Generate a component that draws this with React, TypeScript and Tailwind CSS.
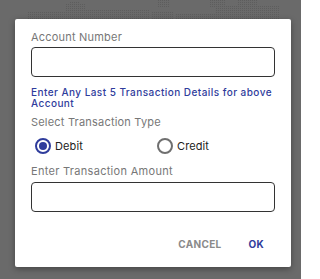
const font = { fontFamily: 'Inter, "Liberation Sans", Arial, sans-serif' };

const Radio = ({ label, checked }: { label: string; checked?: boolean }) => (
  <label className="flex items-center gap-[4px] pl-[4px] h-[20px]">
    <span
      className={
        checked
          ? "flex items-center justify-center w-[16px] h-[16px] rounded-full border-[2px] border-[#2f3c9c]"
          : "flex items-center justify-center w-[16px] h-[16px] rounded-full border-[2px] border-[#6f6f6f]"
      }
    >
      {checked && <span className="w-[8px] h-[8px] rounded-full bg-[#2f3c9c]" />}
    </span>
    <span className="text-[11px] leading-[13px] text-[#222] tracking-[0.1px]">{label}</span>
  </label>
);

const MapDots = () => (
  <svg className="absolute left-0 top-0" width="301" height="19">
    <defs>
      <pattern id="dots" width="2" height="2" patternUnits="userSpaceOnUse">
        <rect width="1" height="1" fill="#5d5d5d" />
      </pattern>
    </defs>
    <g fill="url(#dots)">
      <rect x="27" y="12" width="40" height="7" />
      <rect x="66" y="4" width="20" height="15" />
      <rect x="70" y="1" width="10" height="4" />
      <rect x="86" y="9" width="64" height="10" />
      <rect x="152" y="11" width="22" height="8" />
      <rect x="158" y="0" width="12" height="8" />
      <rect x="176" y="14" width="40" height="5" />
      <rect x="210" y="0" width="16" height="8" />
      <rect x="216" y="6" width="64" height="13" />
      <rect x="238" y="0" width="20" height="7" />
    </g>
  </svg>
);

export default function App() {
  return (
    <div className="relative w-[301px] h-[279px] bg-[#6a6a6a] overflow-hidden pt-[19px] pl-[15px]" style={font}>
      <MapDots />
      <div className="relative w-[276px] h-[248px] bg-white rounded-[2px] shadow-[0_2px_6px_rgba(0,0,0,0.35)] px-[16px] pt-[12px]">
        <p className="text-[11px] leading-[13px] text-[#777] tracking-[0.2px]">Account Number</p>
        <div className="mt-[3px] h-[30px] rounded-[4px] border border-[#333]" />

        <p className="mt-[10px] text-[10px] leading-[10.5px] font-medium text-[#2f3c9c] tracking-[0.45px]">
          Enter Any Last 5 Transaction Details for above Account
        </p>

        <p className="mt-[8px] text-[11px] leading-[13px] text-[#777] tracking-[0.2px]">Select Transaction Type</p>

        <div className="mt-[7px] grid grid-cols-2">
          <Radio label="Debit" checked />
          <Radio label="Credit" />
        </div>

        <p className="mt-[9px] text-[11px] leading-[13px] text-[#777] tracking-[0.3px]">Enter Transaction Amount</p>
        <div className="mt-[4px] h-[30px] rounded-[4px] border border-[#333]" />

        <div className="mt-[26px] flex justify-end gap-[27px] mr-[11px]">
          <button className="text-[10px] leading-[12px] font-bold text-[#8a8a8a] tracking-[0.3px]">CANCEL</button>
          <button className="text-[10px] leading-[12px] font-bold text-[#2f3c9c] tracking-[0.3px]">OK</button>
        </div>
      </div>
    </div>
  );
}
